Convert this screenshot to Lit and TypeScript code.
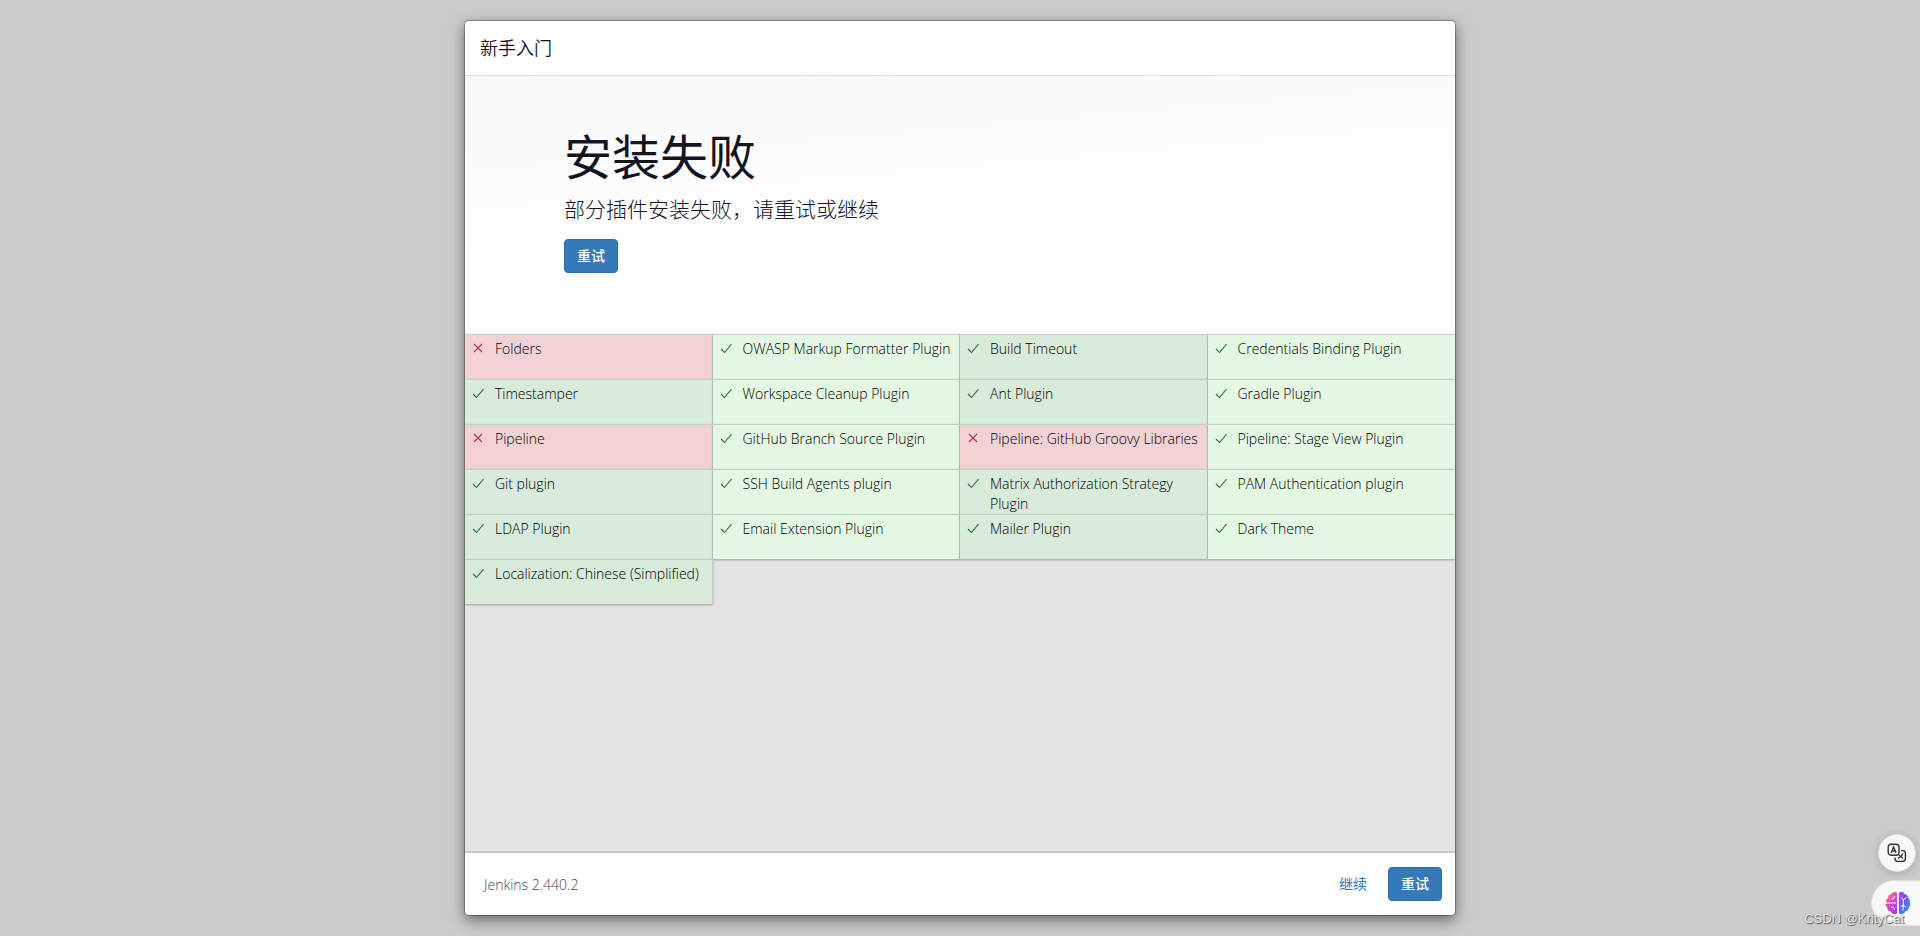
import { LitElement, html, css, svg } from "lit";
import { customElement, property } from "lit/decorators.js";

interface Plugin {
  name: string;
  failed?: boolean;
}

const PLUGINS: Plugin[] = [
  { name: "Folders", failed: true },
  { name: "OWASP Markup Formatter Plugin" },
  { name: "Build Timeout" },
  { name: "Credentials Binding Plugin" },
  { name: "Timestamper" },
  { name: "Workspace Cleanup Plugin" },
  { name: "Ant Plugin" },
  { name: "Gradle Plugin" },
  { name: "Pipeline", failed: true },
  { name: "GitHub Branch Source Plugin" },
  { name: "Pipeline: GitHub Groovy Libraries", failed: true },
  { name: "Pipeline: Stage View Plugin" },
  { name: "Git plugin" },
  { name: "SSH Build Agents plugin" },
  { name: "Matrix Authorization Strategy Plugin" },
  { name: "PAM Authentication plugin" },
  { name: "LDAP Plugin" },
  { name: "Email Extension Plugin" },
  { name: "Mailer Plugin" },
  { name: "Dark Theme" },
  { name: "Localization: Chinese (Simplified)" },
];

@customElement("plugin-cell")
export class PluginCell extends LitElement {
  @property() name = "";
  @property({ type: Boolean, reflect: true }) failed = false;

  static styles = css`
    :host {
      display: flex;
      align-items: flex-start;
      gap: 10px;
      padding: 4px 4px 0 7px;
      box-sizing: border-box;
      line-height: 20px;
    }
    .icon {
      flex: none;
      width: 13px;
      height: 20px;
      fill: none;
      stroke: #2c7832;
      stroke-width: 1.1;
    }
    :host([failed]) .icon {
      stroke: #b5383c;
    }
  `;

  render() {
    return html`
      <svg class="icon" viewBox="0 0 13 20" aria-hidden="true">
        ${this.failed
          ? svg`<path d="M2 5l8 8M10 5L2 13" />`
          : svg`<path d="M1 10l3.500 3.500L11.500 5.200" />`}
      </svg>
      <span>${this.name}</span>
    `;
  }
}

@customElement("app-root")
export class AppRoot extends LitElement {
  static styles = css`
    :host {
      display: block;
      box-sizing: border-box;
      height: 100vh;
      padding: 21px;
      overflow: hidden;
      background: #cbcbcb;
      color: #14141f;
      font: 14px/20px "Open Sans", "Noto Sans CJK SC", sans-serif;
    }
    .dialog {
      display: flex;
      flex-direction: column;
      max-width: 990px;
      height: 100%;
      margin: 0 auto;
      border-radius: 4px;
      background: #fff;
      overflow: hidden;
      box-shadow: 0 0 1px 1px rgba(0, 0, 0, 0.3), 0 5px 15px rgba(0, 0, 0, 0.5);
    }
    .header {
      padding: 14px 15px;
      border-bottom: 1px solid #e0e0e0;
    }
    .title {
      margin: 0;
      font-size: 18px;
      font-weight: 350;
      line-height: 26px;
    }
    .body {
      flex: 1;
      min-height: 0;
      overflow: auto;
      background: #e4e4e4;
    }
    .hero {
      padding: 48px 10% 61px;
      background: linear-gradient(175deg, #f8f8f8, #fff 60%);
    }
    .hero-title {
      margin: 0;
      font-size: 48px;
      font-weight: 400;
      line-height: 66px;
    }
    .hero-text {
      margin: 4px 0 15px;
      font-size: 21px;
      font-weight: 300;
      line-height: 30px;
    }
    .btn {
      height: 34px;
      padding: 0 12px;
      border: 1px solid #2e6da4;
      border-radius: 4px;
      background: #337ab7;
      color: #fff;
      font: inherit;
      font-weight: 500;
      display: block;
    }
    .plugins {
      display: grid;
      grid-template-columns: repeat(4, 1fr);
      grid-auto-rows: 45px;
      margin: 0;
      padding: 0;
      list-style: none;
    }
    .plugin {
      box-sizing: border-box;
      border-top: 1px solid #c0d2c1;
      border-right: 1px solid #c0d2c1;
      background: #d9ebd9;
      color: #000;
      font-weight: 340;
      box-shadow: 0 1px 2px rgba(0, 0, 0, 0.3);
    }
    .plugin:nth-child(-n + 4) {
      border-top-color: #c8ccc8;
    }
    .plugin:nth-child(even) {
      background: #e5f8e4;
    }
    .plugin:nth-child(4n) {
      border-right: 0;
    }
    .plugin.failed {
      background: #f2d2d4;
    }
    .footer {
      display: flex;
      align-items: center;
      justify-content: space-between;
      padding: 14px 13px 14px 19px;
      border-top: 2px solid #c9c9c9;
    }
    .version {
      padding-top: 2px;
      color: #44444d;
      font-weight: 340;
    }
    .actions {
      display: flex;
      align-items: center;
      gap: 21px;
    }
    .continue {
      color: #337ab7;
      text-decoration: none;
    }
    .floating {
      position: absolute;
      right: 0;
      bottom: 10px;
      display: flex;
      flex-direction: column;
      align-items: flex-end;
      gap: 8px;
    }
    .round {
      display: grid;
      place-items: center;
      box-sizing: border-box;
      padding: 0;
      border: 1px solid #dedede;
      background: #f8f8f8;
    }
    .translate {
      width: 38px;
      height: 38px;
      margin-right: 4px;
      border-radius: 50%;
      box-shadow: 0 2px 8px rgba(0, 0, 0, 0.16);
    }
    .assistant {
      width: 49px;
      height: 46px;
      padding-left: 4px;
      border-right: 0;
      border-radius: 23px 0 0 23px;
    }
    .watermark {
      position: absolute;
      right: 16px;
      bottom: 7px;
      color: rgba(255, 255, 255, 0.9);
      font: 13px/20px "Liberation Sans", sans-serif;
      text-shadow: 1px 1px 1px #555, 0 0 1px #777;
    }
  `;

  render() {
    return html`
      <main class="dialog">
        <header class="header"><h4 class="title">新手入门</h4></header>
        <div class="body">
          <section class="hero">
            <h1 class="hero-title">安装失败</h1>
            <p class="hero-text">部分插件安装失败，请重试或继续</p>
            <button class="btn" type="button">重试</button>
          </section>
          <ul class="plugins">
            ${PLUGINS.map(
              (p) => html`<li class="plugin ${p.failed ? "failed" : ""}">
                <plugin-cell .name=${p.name} .failed=${!!p.failed}></plugin-cell>
              </li>`
            )}
          </ul>
        </div>
        <footer class="footer">
          <span class="version">Jenkins 2.440.2</span>
          <div class="actions">
            <a class="continue" href="#continue">继续</a>
            <button class="btn" type="button">重试</button>
          </div>
        </footer>
      </main>
      <div class="floating">
        <button class="round translate" type="button" aria-label="翻译">
          <svg width="20" height="20" viewBox="0 0 20 20" fill="none" stroke="#333" stroke-width="1.4">
            <rect x="1.2" y="1.2" width="10.8" height="11" rx="2.8" />
            <path d="M4.2 9.8L6.6 4l2.4 5.8M5 8h3.2" />
            <path d="M14 7.6h1.8a2.6 2.6 0 0 1 2.6 2.6v5.4a2.8 2.8 0 0 1-2.8 2.8h-5a2.6 2.6 0 0 1-2.6-2.6v-1.2" />
            <path d="M15.8 10.4c-.8 2.4-2.4 4.2-4.8 5M12.2 12l3.8 3.6" stroke-width="1.2" />
          </svg>
        </button>
        <button class="round assistant" type="button" aria-label="AI 助手">
          <svg width="26" height="24" viewBox="0 0 26 24">
            <defs>
              <linearGradient id="left" x1="0" y1="0" x2="0.6" y2="1">
                <stop offset="0" stop-color="#ff9a3c" />
                <stop offset="0.45" stop-color="#e84fb4" />
                <stop offset="1" stop-color="#a53cf5" />
              </linearGradient>
              <linearGradient id="right" x1="0" y1="0" x2="0.8" y2="1">
                <stop offset="0" stop-color="#b13cf0" />
                <stop offset="0.5" stop-color="#6a5bf7" />
                <stop offset="1" stop-color="#289cff" />
              </linearGradient>
            </defs>
            <path
              fill="url(#left)"
              d="M12.3 3.2C12.2 1.6 11 1 9.6 1 7.8 1 6.6 1.8 6.2 3.3 4 3.4 2.8 5 3.1 7.1 1.3 7.9.6 9.6 1.3 11.5.1 13.2.6 15.4 2.3 16.4 2.2 18.7 3.6 20.1 5.700 20.200 6.400 22.200 8 23 9.800 23c1.600 0 2.500-.9 2.500-2.300z"
            />
            <path
              fill="url(#right)"
              d="M13.700 3.200C13.800 1.600 15 1 16.400 1c1.800 0 3 .8 3.400 2.300 2.200.1 3.400 1.700 3.100 3.800 1.800.8 2.500 2.500 1.800 4.400 1.200 1.700.7 3.900-1 4.900.1 2.300-1.300 3.700-3.400 3.800-.7 2-2.300 2.800-4.100 2.800-1.600 0-2.500-.9-2.500-2.300z"
            />
            <path
              fill="none"
              stroke="#fff"
              stroke-width="1"
              stroke-linecap="round"
              d="M9.500 5.500c0 1.500-1 2.500-2.800 2.500M1.500 12h9M6.500 16c2 0 3 1 3 2.800M16 6.500l2.300 2.200 2.700-1.700M18.300 8.700v2.800M16 15.500l2.300-1.500 2.500 2M18.300 14v-1.500M18.300 14l-.3 5"
            />
            <path stroke="#f8f8f8" stroke-width="1.400" d="M13 1v22" />
          </svg>
        </button>
      </div>
      <span class="watermark">CSDN @KrityCat</span>
    `;
  }
}
